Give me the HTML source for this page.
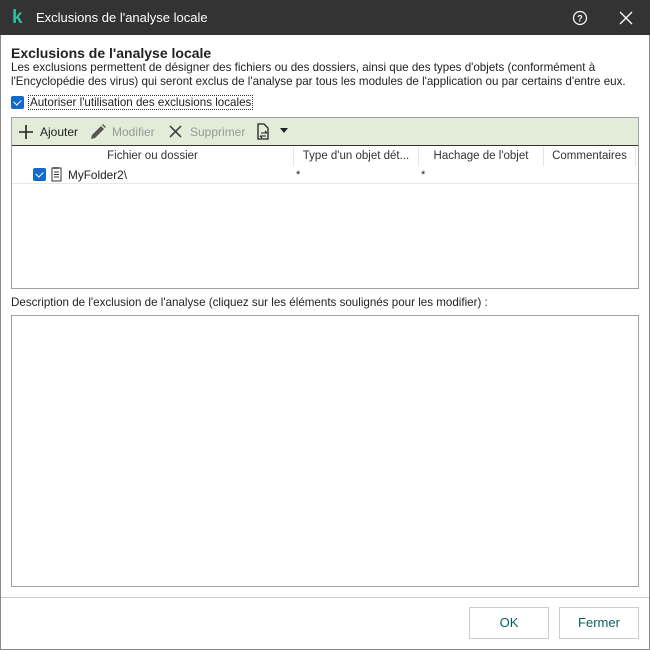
<!DOCTYPE html>
<html><head><meta charset="utf-8"><style>
*{box-sizing:border-box;margin:0;padding:0}
body{width:650px;height:650px;background:#fff;font-family:"Liberation Sans",sans-serif;font-size:12px;color:#222;position:relative;overflow:hidden}
.win{position:absolute;left:0;top:0;width:650px;height:650px;border:1px solid #8a8a8a}
.title{position:absolute;left:0;top:0;width:650px;height:35px;background:#333;color:#fff;font-size:13px}
.abs{position:absolute}
.cb{position:absolute;width:13px;height:13px;background:#1469c7;border-radius:2px}
.cb:after{content:"";position:absolute;left:3.5px;top:2px;width:4px;height:6px;border:solid #fff;border-width:0 1.5px 1.5px 0;transform:rotate(45deg)}
.box{position:absolute;border:1px solid #a0a0a0}
.hdr{position:absolute;top:147px;height:19px;line-height:18px;font-size:11.5px;text-align:center;color:#333}
.btn{position:absolute;top:607px;height:32px;border:1px solid #ccc;background:#fff;text-align:center;line-height:30px;font-size:13px;color:#0b5d5d}
</style></head><body>
<div class="win"></div>
<div class="title">
 <div class="abs" style="left:12px;top:7px;font-weight:bold;font-size:19px;color:#2bbf9a;font-family:'Liberation Sans',sans-serif">k</div>
 <div class="abs" style="left:36px;top:10px">Exclusions de l'analyse locale</div>
 <svg class="abs" style="left:572px;top:10px" width="16" height="16"><circle cx="8" cy="8" r="6.5" fill="none" stroke="#fff" stroke-width="1.2"/><text x="8" y="11.5" font-size="9" font-weight="bold" fill="#fff" text-anchor="middle" font-family="Liberation Sans">?</text></svg>
 <svg class="abs" style="left:619px;top:11px" width="14" height="14"><path d="M1 1L13 13M13 1L1 13" stroke="#fff" stroke-width="1.3"/></svg>
</div>
<div class="abs" style="left:11px;top:45px;font-size:14px;font-weight:bold;color:#222">Exclusions de l'analyse locale</div>
<div class="abs" style="left:11px;top:61px;line-height:14px;width:630px;font-size:11.6px">Les exclusions permettent de désigner des fichiers ou des dossiers, ainsi que des types d'objets (conformément à l'Encyclopédie des virus) qui seront exclus de l'analyse par tous les modules de l'application ou par certains d'entre eux.</div>
<div class="cb" style="left:11px;top:96px"></div>
<div class="abs" style="left:28px;top:95px;border:1px dotted #333;padding:0 1px;font-size:11.6px;line-height:13px">Autoriser l'utilisation des exclusions locales</div>
<div class="box" style="left:11px;top:117px;width:628px;height:172px"></div>
<div class="abs" style="left:12px;top:118px;width:626px;height:28px;background:#e3ecd9;border-bottom:1px solid #333"></div>
<svg class="abs" style="left:18px;top:124px" width="16" height="16"><path d="M8 1V15M1 8H15" stroke="#222" stroke-width="1.6"/></svg>
<div class="abs" style="left:40px;top:125px">Ajouter</div>
<svg class="abs" style="left:89px;top:123px" width="18" height="18"><path d="M2 16L3 12L12 3L15 6L6 15Z" fill="#555"/><path d="M13 2L14 1L17 4L16 5Z" fill="#555"/></svg>
<div class="abs" style="left:112px;top:125px;color:#999">Modifier</div>
<svg class="abs" style="left:169px;top:125px" width="13" height="13"><path d="M1 1L12 12M12 1L1 12" stroke="#444" stroke-width="1.6"/></svg>
<div class="abs" style="left:190px;top:125px;color:#999">Supprimer</div>
<svg class="abs" style="left:256px;top:123px" width="14" height="18"><path d="M2 1H8L12 5V16H2Z" fill="none" stroke="#222" stroke-width="1.3"/><path d="M5 10H11M9 8L11 10M10 13H4M6 15L4 13" stroke="#222" stroke-width="1.1" fill="none"/></svg>
<svg class="abs" style="left:280px;top:128px" width="8" height="5"><path d="M0 0H8L4 5Z" fill="#222"/></svg>
<div class="hdr" style="left:12px;width:281px">Fichier ou dossier</div>
<div class="hdr" style="left:293px;width:125px;border-left:1px solid #e5e5e5">Type d'un objet dét...</div>
<div class="hdr" style="left:418px;width:125px;border-left:1px solid #e5e5e5">Hachage de l'objet</div>
<div class="hdr" style="left:543px;width:93px;border-left:1px solid #e5e5e5;border-right:1px solid #e5e5e5">Commentaires</div>
<div class="cb" style="left:33px;top:168px"></div>
<svg class="abs" style="left:51px;top:166px" width="11" height="16"><rect x="1" y="2" width="9" height="13" fill="none" stroke="#333"/><path d="M3 6H8M3 8.5H8M3 11H8M3 1V3M5 1V3M7 1V3" stroke="#333"/></svg>
<div class="abs" style="left:68px;top:168px;font-size:11.8px">MyFolder2\</div>
<div class="abs" style="left:296px;top:169px;font-size:11px">*</div>
<div class="abs" style="left:421px;top:169px;font-size:11px">*</div>
<div class="abs" style="left:12px;top:183px;width:626px;height:1px;background:#e8e8e8"></div>
<div class="abs" style="left:11px;top:296px;font-size:11.6px">Description de l'exclusion de l'analyse (cliquez sur les éléments soulignés pour les modifier) :</div>
<div class="box" style="left:11px;top:315px;width:628px;height:272px"></div>
<div class="abs" style="left:1px;top:597px;width:648px;height:1px;background:#ccc"></div>
<div class="btn" style="left:469px;width:80px">OK</div>
<div class="btn" style="left:559px;width:80px">Fermer</div>
</body></html>
